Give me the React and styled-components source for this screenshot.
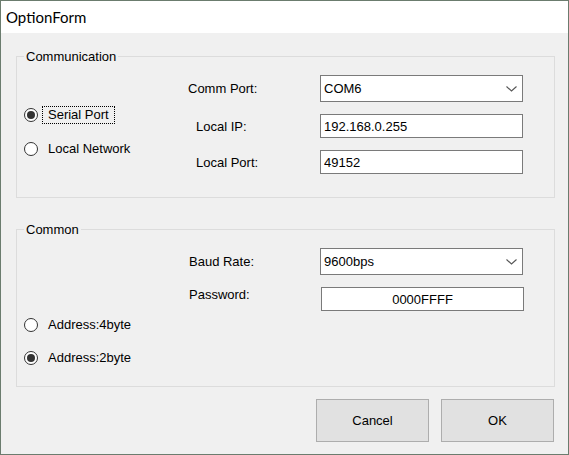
import styled, { createGlobalStyle } from "styled-components";

const GlobalStyle = createGlobalStyle`
  html, body {
    margin: 0;
    padding: 0;
    background: #ffffff;
  }
`;

const Window = styled.div`
  width: 569px;
  height: 455px;
  box-sizing: border-box;
  border: 1px solid #6b7c6e;
  display: flex;
  flex-direction: column;
  font-family: "Liberation Sans", Arial, sans-serif;
  font-size: 13px;
  color: #000;
`;

const TitleBar = styled.div`
  height: 32px;
  flex: none;
  background: #ffffff;
  display: flex;
  align-items: center;
  padding-left: 5px;
  font-family: Lato, "Open Sans", sans-serif;
  font-size: 15px;
  color: #000;
`;

const Body = styled.div`
  flex: 1;
  background: #f0f0f0;
  padding: 16px 13px 0 15px;
  display: flex;
  flex-direction: column;
`;

const Group = styled.fieldset`
  margin: ${(p) => p.$mt || 0}px 0 0 0;
  padding: 0;
  border: 1px solid #dcdcdc;
  min-width: 0;
`;

const Legend = styled.legend`
  margin-left: 7px;
  padding: 0 2px;
  line-height: 15px;
  font-size: 13px;
`;

const GroupBody = styled.div`
  display: flex;
  align-items: flex-start;
  padding: 11px 0 ${(p) => p.$pb}px 0;
`;

const RadioColumn = styled.div`
  width: 164px;
  padding: ${(p) => p.$offset}px 0 0 7px;
  display: flex;
  flex-direction: column;
  gap: ${(p) => p.$gap}px;
`;

const RadioRow = styled.label`
  display: flex;
  align-items: center;
  height: 18px;
`;

const RadioCircle = styled.span`
  width: 14px;
  height: 14px;
  box-sizing: border-box;
  border: 1px solid #333;
  border-radius: 50%;
  background: #fff;
  display: flex;
  align-items: center;
  justify-content: center;
  &::after {
    content: "";
    width: 8px;
    height: 8px;
    border-radius: 50%;
    background: ${(p) => (p.$checked ? "#333" : "transparent")};
  }
`;

const RadioText = styled.span`
  margin-left: 4px;
  padding: 0 5px;
  height: 18px;
  line-height: 16px;
  box-sizing: border-box;
  border: 1px ${(p) => (p.$focus ? "dotted #000" : "solid transparent")};
`;

const FieldGrid = styled.div`
  display: grid;
  grid-template-columns: 132px 203px;
  grid-template-rows: ${(p) => p.$rows};
  row-gap: 12px;
`;

const Label = styled.div`
  padding-left: ${(p) => p.$indent || 0}px;
  align-self: ${(p) => (p.$top ? "start" : "center")};
  line-height: 15px;
`;

const ComboBox = styled.div`
  box-sizing: border-box;
  height: 27px;
  border: 1px solid #7a7a7a;
  background: #fff;
  display: flex;
  align-items: center;
  justify-content: space-between;
  padding: 0 5px 0 3px;
`;

const TextBox = styled.input`
  box-sizing: border-box;
  height: 24px;
  width: ${(p) => (p.$shift ? "203px" : "100%")};
  margin-left: ${(p) => (p.$shift ? 1 : 0)}px;
  border: 1px solid #7a7a7a;
  background: #fff;
  padding: 0 3px;
  font-family: "Liberation Sans", Arial, sans-serif;
  font-size: 13px;
  color: #000;
  text-align: ${(p) => (p.$center ? "center" : "left")};
  outline: none;
`;

const ButtonRow = styled.div`
  display: flex;
  justify-content: flex-end;
  gap: 12px;
  margin-top: 12px;
  padding-right: 1px;
`;

const Button = styled.button`
  width: 113px;
  height: 43px;
  box-sizing: border-box;
  border: 1px solid #adadad;
  background: #e1e1e1;
  font-family: "Liberation Sans", Arial, sans-serif;
  font-size: 13px;
  color: #000;
  padding: 0;
`;

const Chevron = () => (
  <svg width="11" height="6" viewBox="0 0 11 6">
    <path d="M0.5 0.5 L5.5 5 L10.5 0.5" fill="none" stroke="#555" strokeWidth="1.1" />
  </svg>
);

const Radio = ({ checked, focus, children }) => (
  <RadioRow>
    <RadioCircle $checked={checked} />
    <RadioText $focus={focus}>{children}</RadioText>
  </RadioRow>
);

const App = () => {
  return (
    <>
      <GlobalStyle />
      <Window>
        <TitleBar>OptionForm</TitleBar>
        <Body>
          <Group>
            <Legend>Communication</Legend>
            <GroupBody $pb={23}>
              <RadioColumn $offset={31} $gap={16}>
                <Radio checked focus>
                  Serial Port
                </Radio>
                <Radio>Local Network</Radio>
              </RadioColumn>
              <FieldGrid $rows="27px 24px 24px">
                <Label>Comm Port:</Label>
                <ComboBox>
                  <span>COM6</span>
                  <Chevron />
                </ComboBox>
                <Label $indent={8}>Local IP:</Label>
                <TextBox readOnly value="192.168.0.255" />
                <Label $indent={8}>Local Port:</Label>
                <TextBox readOnly value="49152" />
              </FieldGrid>
            </GroupBody>
          </Group>
          <Group $mt={24}>
            <Legend>Common</Legend>
            <GroupBody $pb={19}>
              <RadioColumn $offset={68} $gap={15}>
                <Radio>Address:4byte</Radio>
                <Radio checked>Address:2byte</Radio>
              </RadioColumn>
              <FieldGrid $rows="27px 24px">
                <Label $indent={1}>Baud Rate:</Label>
                <ComboBox>
                  <span>9600bps</span>
                  <Chevron />
                </ComboBox>
                <Label $indent={1} $top>
                  Password:
                </Label>
                <TextBox readOnly value="0000FFFF" $center $shift />
              </FieldGrid>
            </GroupBody>
          </Group>
          <ButtonRow>
            <Button>Cancel</Button>
            <Button>OK</Button>
          </ButtonRow>
        </Body>
      </Window>
    </>
  );
};

export default App;
